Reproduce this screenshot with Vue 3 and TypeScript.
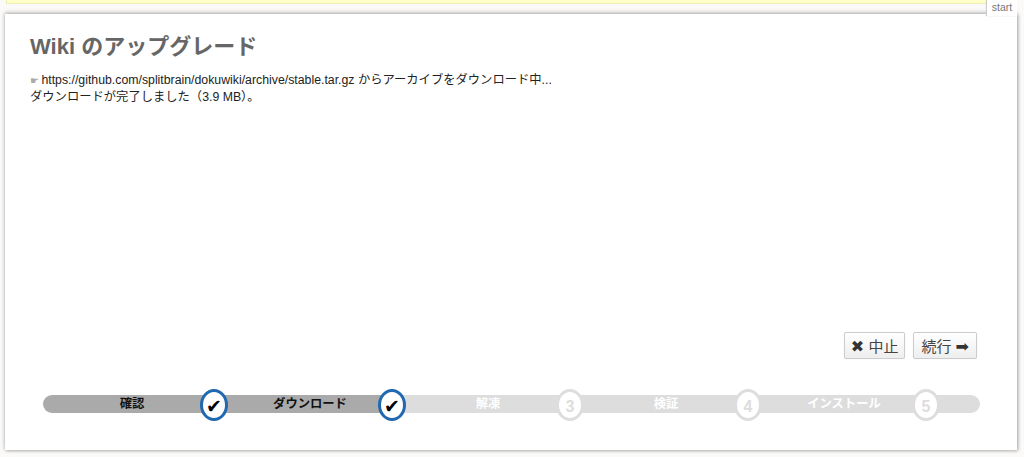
<script setup lang="ts">
interface Step { label: string; mark: string; done: boolean }
const steps: Step[] = [
  { label: '確認', mark: '✔', done: true },
  { label: 'ダウンロード', mark: '✔', done: true },
  { label: '解凍', mark: '3', done: false },
  { label: '検証', mark: '4', done: false },
  { label: 'インストール', mark: '5', done: false },
]
</script>

<template>
  <div class="page">
    <div class="notice"></div>
    <span class="tab">start</span>
    <main class="panel">
      <h1 class="title">Wiki のアップグレード</h1>
      <p class="log"><span class="hand">☛</span> https://github.com/splitbrain/dokuwiki/archive/stable.tar.gz からアーカイブをダウンロード中...<br>ダウンロードが完了しました（3.9 MB）。</p>
      <div class="actions">
        <button class="btn" type="button"><span class="sym">✖</span> 中止</button>
        <button class="btn" type="button">続行 <span class="sym">➡</span></button>
      </div>
      <div class="track">
        <div v-for="s in steps" :key="s.label" class="step" :class="{ done: s.done }">
          <span class="label">{{ s.label }}</span>
          <span class="mark">{{ s.mark }}</span>
        </div>
      </div>
    </main>
  </div>
</template>

<style>
html, body { margin: 0; background: #fbfaf9; }
</style>

<style scoped>
.page {
  position: relative;
  width: 1024px;
  height: 457px;
  overflow: hidden;
  font-family: "Liberation Sans", "Noto Sans CJK JP", sans-serif;
  color: #333;
  box-sizing: border-box;
  padding: 14px 7px 7px 5px;
}
.notice {
  position: absolute;
  left: 6px;
  top: -4px;
  width: 981px;
  height: 8px;
  background: #ffffc8;
  border: 1px solid #eeeebb;
  box-sizing: border-box;
}
.tab {
  position: absolute;
  right: 7px;
  top: 0;
  z-index: 2;
  width: 30px;
  height: 16px;
  padding-top: 1px;
  box-sizing: border-box;
  background: #fff;
  box-shadow: -1px 0 1px #ccc;
  color: #777;
  font-size: 10.5px;
  line-height: 13px;
  text-align: center;
}
.panel {
  display: flex;
  flex-direction: column;
  height: 436px;
  box-sizing: border-box;
  padding: 19px 37px 0 25px;
  background: #fff;
  box-shadow: 0 -1px 4px #aaa, 1px 1px 3px #bbb;
}
.title {
  margin: 0;
  font-size: 22px;
  line-height: 28px;
  font-weight: 700;
  color: #666;
}
.log {
  margin: 11px 0 0;
  font-size: 12.3px;
  line-height: 17px;
  color: #222;
}
.hand { color: #aaa; font-size: 10px; margin-right: -1px; }
.actions {
  display: flex;
  justify-content: flex-end;
  gap: 8px;
  margin-top: auto;
  margin-right: 3px;
}
.btn {
  height: 27px;
  padding: 0 7px;
  border: 1px solid #ccc;
  border-radius: 2px;
  background: linear-gradient(#fff, #eee);
  font: 15px "Liberation Sans", "Noto Sans CJK JP", sans-serif;
  color: #444;
  box-shadow: 0 0 1px #ddd;
}
.btn:first-child { padding: 0 6px; }
.sym { color: #333; font-family: "DejaVu Sans", sans-serif; font-size: 16px; line-height: 1; }
.track {
  display: flex;
  width: 937px;
  height: 18px;
  margin: 36px 0 37px 13px;
  padding-left: 7px;
  box-sizing: border-box;
  border-radius: 9px;
  background: linear-gradient(to right, #aaa 0, #aaa 349px, #ddd 349px, #ddd 100%);
}
.step {
  display: flex;
  width: 178px;
  flex: none;
  height: 18px;
}
.label {
  width: 164px;
  flex: none;
  text-align: center;
  font-size: 12.3px;
  font-weight: 700;
  line-height: 18px;
  color: #fff;
}
.step.done .label { color: #111; }
.mark {
  position: relative;
  z-index: 1;
  flex: none;
  width: 28px;
  height: 32px;
  margin: -6px 0 0 -14px;
  box-sizing: border-box;
  border: 3px solid #ddd;
  border-radius: 50%;
  background: #fff;
  text-align: center;
  font-size: 16px;
  font-weight: 700;
  line-height: 29px;
  color: #ddd;
}
.step.done .mark {
  border-color: #2068b0;
  color: #000;
  font-family: "DejaVu Sans", sans-serif;
  font-size: 19px;
}
</style>
